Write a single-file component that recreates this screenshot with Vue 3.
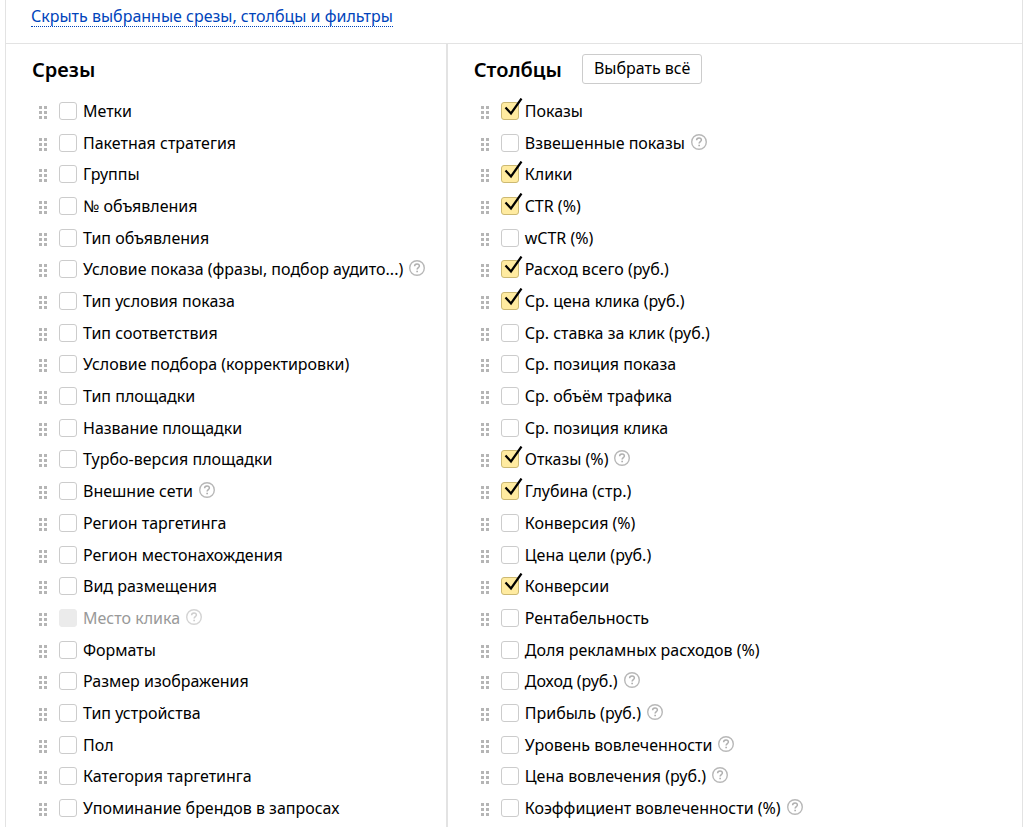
<script setup>
import { reactive } from 'vue'

const item = (label, options = {}) => ({
  label,
  checked: false,
  help: false,
  disabled: false,
  ...options,
})

const slices = reactive([
  item('Метки'),
  item('Пакетная стратегия'),
  item('Группы'),
  item('№ объявления'),
  item('Тип объявления'),
  item('Условие показа (фразы, подбор аудито...)', { help: true }),
  item('Тип условия показа'),
  item('Тип соответствия'),
  item('Условие подбора (корректировки)'),
  item('Тип площадки'),
  item('Название площадки'),
  item('Турбо-версия площадки'),
  item('Внешние сети', { help: true }),
  item('Регион таргетинга'),
  item('Регион местонахождения'),
  item('Вид размещения'),
  item('Место клика', { help: true, disabled: true }),
  item('Форматы'),
  item('Размер изображения'),
  item('Тип устройства'),
  item('Пол'),
  item('Категория таргетинга'),
  item('Упоминание брендов в запросах'),
])

const columns = reactive([
  item('Показы', { checked: true }),
  item('Взвешенные показы', { help: true }),
  item('Клики', { checked: true }),
  item('CTR (%)', { checked: true }),
  item('wCTR (%)'),
  item('Расход всего (руб.)', { checked: true }),
  item('Ср. цена клика (руб.)', { checked: true }),
  item('Ср. ставка за клик (руб.)'),
  item('Ср. позиция показа'),
  item('Ср. объём трафика'),
  item('Ср. позиция клика'),
  item('Отказы (%)', { checked: true, help: true }),
  item('Глубина (стр.)', { checked: true }),
  item('Конверсия (%)'),
  item('Цена цели (руб.)'),
  item('Конверсии', { checked: true }),
  item('Рентабельность'),
  item('Доля рекламных расходов (%)'),
  item('Доход (руб.)', { help: true }),
  item('Прибыль (руб.)', { help: true }),
  item('Уровень вовлеченности', { help: true }),
  item('Цена вовлечения (руб.)', { help: true }),
  item('Коэффициент вовлеченности (%)', { help: true }),
])

const groups = [
  { id: 'slices', title: 'Срезы', items: slices, selectAll: false },
  { id: 'columns', title: 'Столбцы', items: columns, selectAll: true },
]

function selectAll(items) {
  items.forEach((entry) => {
    if (!entry.disabled) entry.checked = true
  })
}
</script>

<template>
  <main class="panel">
    <div class="toolbar">
      <a class="toggle" href="#">Скрыть выбранные срезы, столбцы и фильтры</a>
    </div>
    <div class="groups">
      <section v-for="group in groups" :key="group.id" class="group">
        <header class="head">
          <h2 class="title">{{ group.title }}</h2>
          <button v-if="group.selectAll" class="all" type="button" @click="selectAll(group.items)">Выбрать всё</button>
        </header>
        <ul class="list">
          <li
            v-for="(entry, i) in group.items"
            :key="entry.label"
            class="row"
            :class="{ disabled: entry.disabled }"
          >
            <svg class="grip" width="9" height="13" viewBox="0 0 9 13" aria-hidden="true">
              <path d="M0 0h3v3H0zM5 0h3v3H5zM0 5h3v3H0zM5 5h3v3H5zM0 10h3v3H0zM5 10h3v3H5z" fill="#b5b5b5" />
            </svg>
            <span class="box">
              <input
                :id="`${group.id}-${i}`"
                v-model="entry.checked"
                class="check"
                type="checkbox"
                :disabled="entry.disabled"
              />
              <svg v-if="entry.checked" class="tick" width="22" height="18" viewBox="0 0 22 18" aria-hidden="true">
                <path d="M4.5 9.5L10 15.5L20.5 0.5" fill="none" stroke="#000" stroke-width="2.2" />
              </svg>
            </span>
            <label class="label" :for="`${group.id}-${i}`">{{ entry.label }}</label>
            <button v-if="entry.help" class="help" type="button" aria-label="Справка" :disabled="entry.disabled">
              <svg width="16" height="16" viewBox="0 0 16 16" aria-hidden="true">
                <circle cx="8" cy="8" r="7.3" fill="none" stroke="#b8b8b8" stroke-width="1.4" />
                <path d="M5.6 6.3C5.6 4.7 6.6 3.9 8 3.9s2.4.8 2.4 2.2c0 1.6-2.3 1.6-2.3 3.5" fill="none" stroke="#b0b0b0" stroke-width="1.5" />
                <path d="M7.3 10.7h1.7v1.6H7.3z" fill="#b0b0b0" />
              </svg>
            </button>
          </li>
        </ul>
      </section>
    </div>
  </main>
</template>

<style>
body {
  margin: 0;
  background: #fff;
}
</style>

<style scoped>
.panel {
  box-sizing: border-box;
  display: flex;
  flex-direction: column;
  min-height: 100vh;
  margin: 0 4px 0 5px;
  border: solid #e3e3e3;
  border-width: 0 1px;
  color: #000;
  font: 16px/20px "Noto Sans", "Open Sans", sans-serif;
}

.toolbar {
  display: flex;
  padding: 6px 25px 16px;
  border-bottom: 1px solid #e3e3e3;
}

.toggle {
  border-bottom: 1px dotted #04b;
  color: #04b;
  text-decoration: none;
}

.groups {
  flex: 1;
  display: grid;
  grid-template-columns: minmax(0, 10fr) minmax(0, 13fr);
}

.group {
  display: flex;
  flex-direction: column;
  padding: 0 0 3px 26px;
}

.group:first-child {
  border-right: 2px solid #e3e3e3;
}

.head {
  display: flex;
  align-items: center;
  gap: 20px;
  height: 51px;
}

.title {
  margin: 0;
  font-size: 20px;
  line-height: 28px;
  font-weight: 600;
}

.all {
  height: 30px;
  margin-bottom: 2px;
  padding: 0 11px 2px;
  border: 1px solid #ccc;
  border-radius: 3px;
  background: #fff;
  color: #000;
  font: inherit;
}

.list {
  flex: 1;
  display: grid;
  grid-auto-rows: 1fr;
  margin: 0;
  padding: 0;
  list-style: none;
}

.row {
  display: flex;
  align-items: center;
  padding-left: 7px;
  white-space: nowrap;
}

.grip {
  flex: none;
  margin-top: 3px;
}

.box {
  position: relative;
  flex: none;
  width: 18px;
  height: 18px;
  margin: 0 6px 0 11px;
}

.check {
  appearance: none;
  box-sizing: border-box;
  display: block;
  width: 18px;
  height: 18px;
  margin: 0;
  border: 1px solid #ccc;
  border-radius: 3px;
  background: #fff;
}

.check:checked {
  border-color: #ccb973;
  background: #ffeba0;
}

.check:disabled {
  border-color: #ebebeb;
  background: #ebebeb;
}

.tick {
  position: absolute;
  left: 0;
  top: -4px;
  pointer-events: none;
}

.help {
  flex: none;
  display: flex;
  margin: 0 0 2px 6px;
  padding: 0;
  border: 0;
  background: none;
}

.disabled .label {
  color: #999;
}

.disabled .help {
  opacity: 0.6;
}
</style>
